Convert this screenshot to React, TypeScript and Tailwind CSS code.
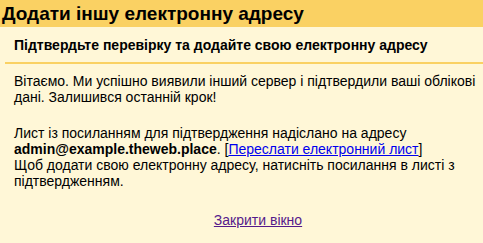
import React from 'react';

export default function App() {
  return (
    <div className="w-full h-[243px] overflow-hidden bg-[#fff7d7] text-black font-['Liberation_Sans',Arial,sans-serif]">
      <div className="w-[520px]">
        <div className="h-[27px] bg-[#fad163] pl-[2px] text-[19px] font-bold leading-[27px]">
          Додати іншу електронну адресу
        </div>
        <div className="pl-[5px]">
          <div className="border-b-2 border-[#fad163] pl-[9px] pt-[10px] pb-[9px] text-[14px] font-bold leading-[16px]">
            Підтвердьте перевірку та додайте свою електронну адресу
          </div>
          <div className="pl-[9px] pr-[18px] text-[14px] leading-[16px]">
            <p className="mt-[9px]">
              Вітаємо. Ми успішно виявили інший сервер і підтвердили ваші облікові дані. Залишився останній крок!
            </p>
            <p className="mt-[20px]">
              Лист із посиланням для підтвердження надіслано на адресу{' '}
              <b>admin@example.theweb.place</b>. [
              <a href="#" className="text-[#0000ee] underline">Переслати електронний лист</a>
              ]<br />
              Щоб додати свою електронну адресу, натисніть посилання в листі з підтвердженням.
            </p>
            <div className="mt-[23px] text-center">
              <a href="#" className="text-[#551a8b] underline">Закрити вікно</a>
            </div>
          </div>
        </div>
      </div>
    </div>
  );
}
